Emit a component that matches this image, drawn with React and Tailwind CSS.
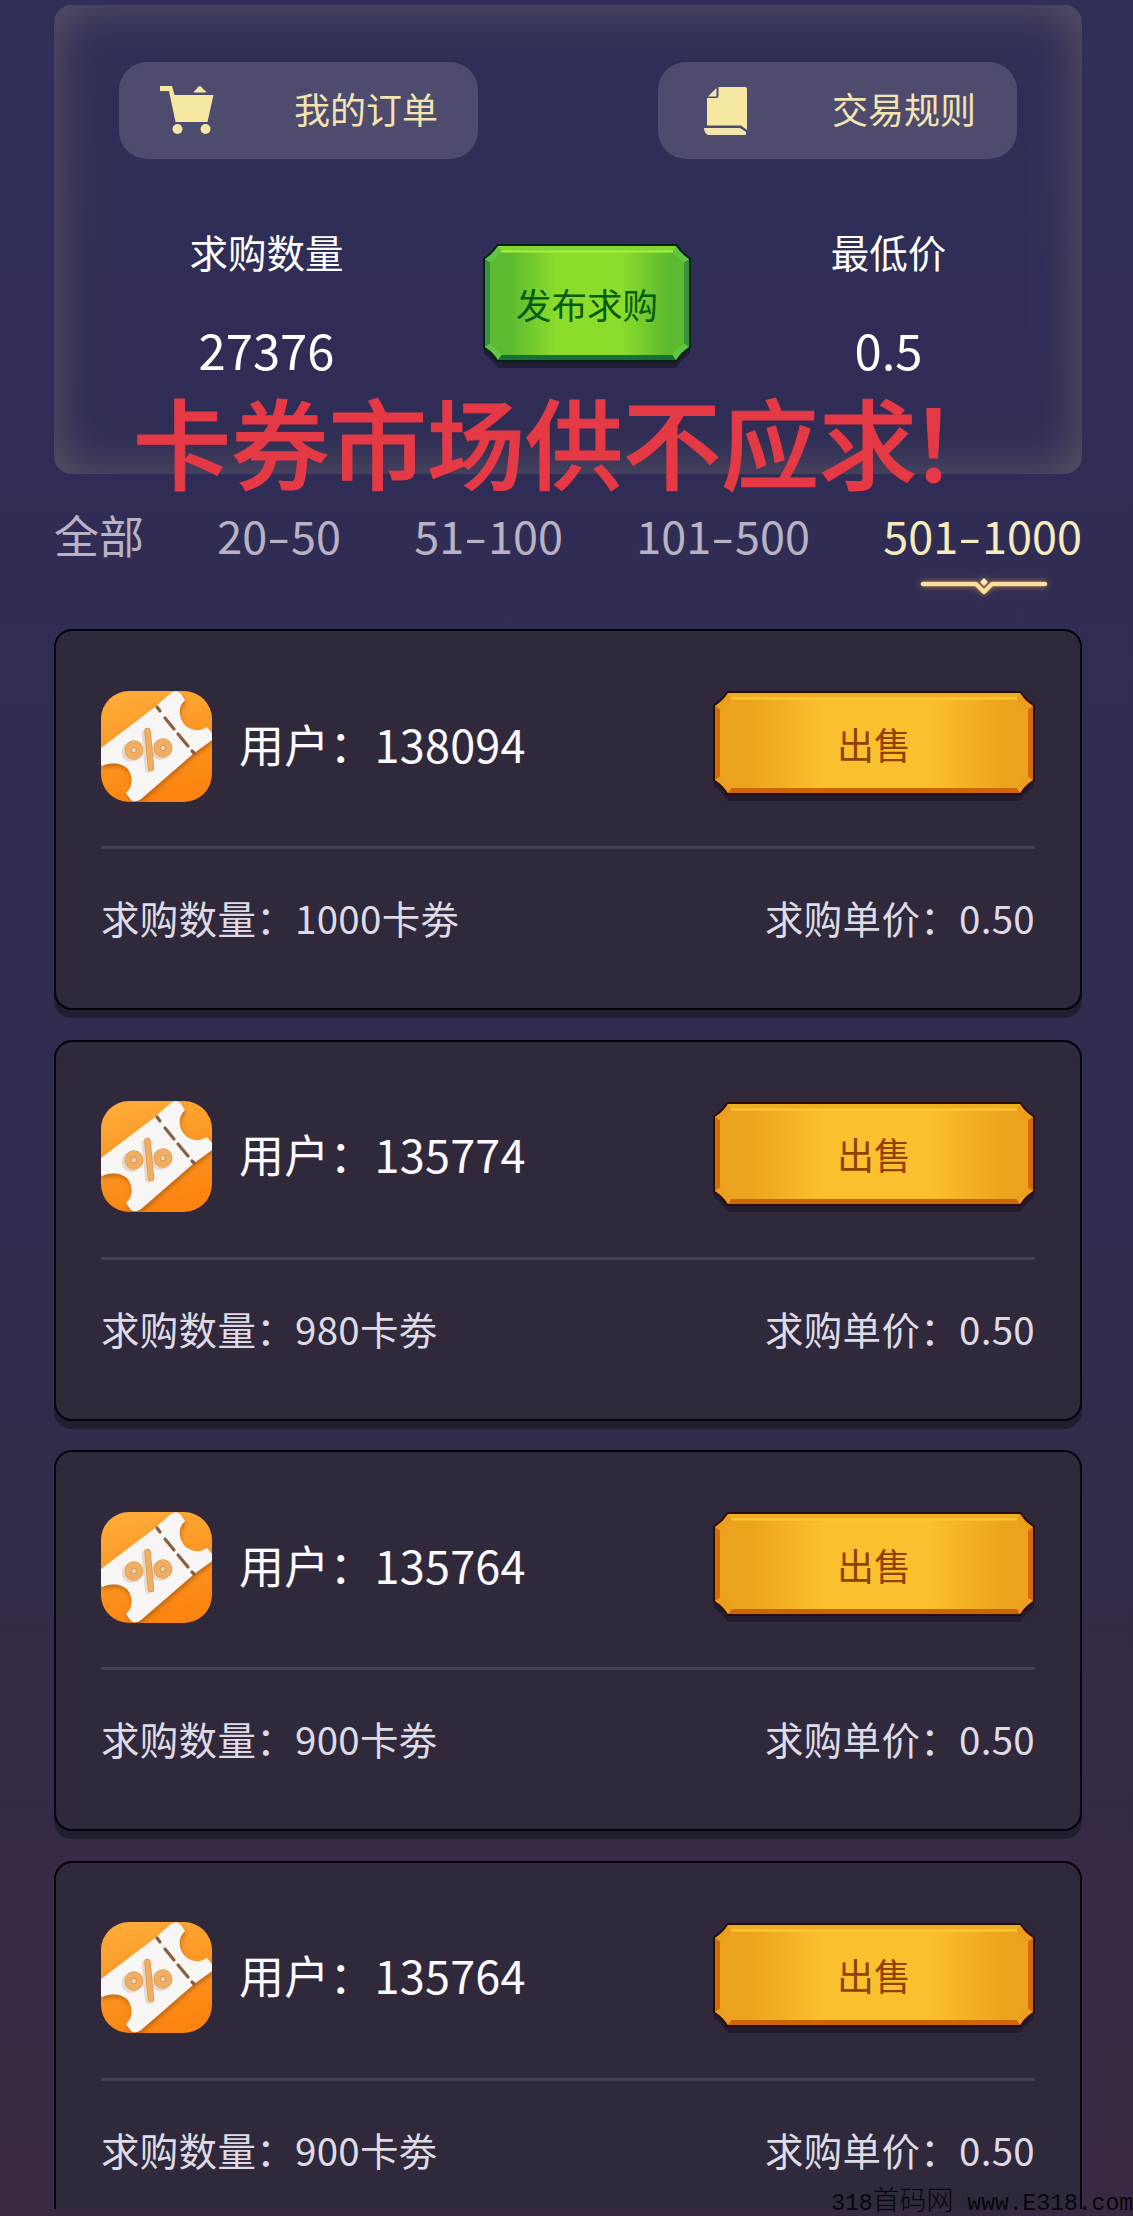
const cards = [
  { id: '138094', qty: '1000' },
  { id: '135774', qty: '980' },
  { id: '135764', qty: '900' },
  { id: '135764', qty: '900' },
];

const tabs = [['全部'], ['20', '50'], ['51', '100'], ['101', '500'], ['501', '1000']];

function Cart() {
  return (
    <svg className="h-[49px] w-[56px]" viewBox="0 0 56 49" fill="#f6e8a2">
      <path d="M1 0H13L15.500 9H54.500L48.500 36H16.500L10 5H1Z" />
      <path d="M34.500 6.500C35.500 4 37.500 4 38.500 1.500Q41 -1 43 1.500C44 4 46.500 4 47.500 6.500Z" />
      <circle cx="18.500" cy="43" r="5" />
      <circle cx="46.500" cy="43" r="5" />
    </svg>
  );
}

function Rules() {
  return (
    <svg className="h-[48px] w-[46px]" viewBox="0 0 46 48">
      <path d="M15.500 0H42Q44 0 44 2V43L38 38.500H4V11H13.500Q15.500 11 15.500 9Z" fill="#f6e8a2" />
      <path d="M13.500 1V9.500H5Z" fill="#efe4bd" />
      <path d="M1 41H37L43 45V48H5Q1 46 1 41Z" fill="#f2e5ae" />
    </svg>
  );
}

function Avatar({ uid }) {
  return (
    <svg className="h-[111px] w-[111px] shrink-0 rounded-[28px]" viewBox="0 0 111 111">
      <defs>
        <linearGradient id={`o${uid}`} x1="0" y1="0" x2="0.300" y2="1">
          <stop offset="0" stopColor="#ffae3c" />
          <stop offset="1" stopColor="#fb8510" />
        </linearGradient>
        <filter id={`s${uid}`} x="-20%" y="-20%" width="140%" height="140%">
          <feDropShadow dx="1" dy="3" stdDeviation="2" floodColor="#8a4300" floodOpacity="0.500" />
        </filter>
      </defs>
      <rect width="111" height="111" fill={`url(#o${uid})`} />
      <path
        filter={`url(#s${uid})`}
        d="M0 57L54 16L56 14L70 2Q76 -2 80 3L84 9C76 16 78 27 83 33C89 40 99 41 106 36L111 42V49L93 62L40 108Q34 112 30 109L25 102C33 95 32 84 26 77C19 71 9 71 1 75L0 73Z"
        fill="#f8f6f5"
      />
      <path d="M56 16L59 20M64 27L73 38M77 43L87 55M91 60L93 62" stroke="#86603f" strokeWidth="3.200" strokeLinecap="round" />
      <g fill="none" strokeLinecap="round">
        <g stroke="#e6d9cf" transform="translate(-3 2)">
          <ellipse cx="33" cy="59" rx="6" ry="6.500" strokeWidth="7" />
          <ellipse cx="62" cy="57" rx="6" ry="6.500" strokeWidth="7" />
          <path d="M46.500 40L50 77" strokeWidth="6" />
        </g>
        <g stroke="#dd964e">
          <ellipse cx="33" cy="59" rx="5.600" ry="6" strokeWidth="7.600" />
          <ellipse cx="62" cy="57" rx="5.600" ry="6" strokeWidth="7.600" />
          <path d="M46.500 40L50 77" strokeWidth="6.500" />
        </g>
        <g stroke="#f0ae62">
          <ellipse cx="33" cy="59" rx="5.800" ry="6.200" strokeWidth="6" />
          <ellipse cx="62" cy="57" rx="5.800" ry="6.200" strokeWidth="6" />
          <path d="M46.500 40L50 77" strokeWidth="5" />
        </g>
      </g>
    </svg>
  );
}

function Plate({ w, h, c, id }) {
  // Rectangle inset by i whose corners are cut by a, each cut slightly concave.
  const shape = (i, a) => {
    const l = i;
    const r = w - i;
    const t = i;
    const b = h - i;
    const q = a * 0.62;
    return `M${l + a} ${t}H${r - a}Q${r - q} ${t + q} ${r} ${t + a}V${b - a}Q${r - q} ${b - q} ${r - a} ${b}H${l + a}Q${l + q} ${b - q} ${l} ${b - a}V${t + a}Q${l + q} ${t + q} ${l + a} ${t}Z`;
  };
  const corner = 'M2 15Q10 10 15 2L18.500 7Q14 14 7 18.500Z';
  return (
    <svg className="absolute left-0 top-0 overflow-visible" width={w} height={h + 8} viewBox={`0 0 ${w} ${h + 8}`}>
      <defs>
        <linearGradient id={id}>
          <stop offset="0" stopColor={c.edge} />
          <stop offset="0.100" stopColor={c.edge} />
          <stop offset="0.340" stopColor={c.mid} />
          <stop offset="0.680" stopColor={c.mid} />
          <stop offset="0.920" stopColor={c.edge} />
          <stop offset="1" stopColor={c.edge} />
        </linearGradient>
      </defs>
      <path d={shape(1, 14)} transform="translate(0 7)" fill="#1f1a2b" opacity="0.750" />
      <path d={shape(0, 14)} fill={c.line} />
      <path d={shape(2, 13)} fill={c.side} />
      <path d={`M15 2H${w - 15}L${w - 18} 8H18Z`} fill={c.top} />
      <path d={`M15 ${h - 2}H${w - 15}L${w - 18} ${h - 8}H18Z`} fill={c.bottom} />
      <path d={shape(7, 11)} fill={`url(#${id})`} />
      <g fill={c.corner}>
        <path d={corner} />
        <path d={corner} transform={`translate(${w} 0) scale(-1 1)`} />
        <path d={corner} transform={`translate(0 ${h}) scale(1 -1)`} />
        <path d={corner} transform={`translate(${w} ${h}) scale(-1 -1)`} />
      </g>
      <path d={`M18 7.500H${w - 18}`} stroke={c.glow} strokeWidth="2" />
    </svg>
  );
}

const gold = { edge: '#eda31d', mid: '#fbc02d', line: '#2b0d08', side: '#d36c06', top: '#eeae20', bottom: '#cb6605', corner: '#ee9d1f', glow: '#ffcb38' };
const green = { edge: '#5cba31', mid: '#8bdc2b', line: '#04200f', side: '#329440', top: '#83d72e', bottom: '#17703a', corner: '#5fc744', glow: '#a8ef40' };

function Card({ id, qty, uid }) {
  return (
    <div className="h-[381px] shrink-0 rounded-[18px] border-2 border-[#05030c] bg-[#2f293b] px-[45px] shadow-[0_8px_0_#221d2f]">
      <div className="flex h-[218px] items-center justify-between border-b-[3px] border-[#463f54] pt-[15px]">
        <div className="flex items-center gap-[27px]">
          <Avatar uid={uid} />
          <span className="pb-[6px] text-[45px] leading-none tracking-[0.200px] text-[#fbf9fd]">用户：{id}</span>
        </div>
        <button className="relative mb-[6px] flex h-[104px] w-[322px] items-center justify-center">
          <Plate w={322} h={104} c={gold} id={`g${uid}`} />
          <span className="relative pt-[2px] text-[37px] leading-none text-[#8f4203]">出售</span>
        </button>
      </div>
      <div className="flex h-[137px] items-center justify-between text-[38.500px] leading-none tracking-[0.300px] text-[#dfdbe6]">
        <span>求购数量：{qty}卡劵</span>
        <span>求购单价：0.50</span>
      </div>
    </div>
  );
}

export default function App() {
  return (
    <div className="relative flex h-[2216px] w-[1133px] flex-col overflow-hidden bg-[linear-gradient(180deg,#2f2f58_0%,#302c54_30%,#332b4c_60%,#382a42_100%)] pl-[54px] pr-[51px] pt-[5px] font-['Noto_Sans_CJK_SC',sans-serif]">
      <section className="relative h-[469px] shrink-0 rounded-[18px] px-[65px] pt-[57px] shadow-[inset_0_0_50px_#5d5964]">
        <div className="flex justify-between">
          <button className="flex h-[97px] w-[359px] items-center justify-between rounded-[28px] bg-[#4d4b6e] pl-[40px] pr-[40px]">
            <Cart />
            <span className="pb-[5px] text-[36px] leading-none text-[#f3e4b2]">我的订单</span>
          </button>
          <button className="flex h-[97px] w-[359px] items-center justify-between rounded-[28px] bg-[#4d4b6e] pl-[45px] pr-[41px]">
            <Rules />
            <span className="pb-[5px] text-[36px] leading-none text-[#f3e4b2]">交易规则</span>
          </button>
        </div>
        <div className="flex justify-between px-[18px] pt-[72px] text-white">
          <div className="flex w-[259px] flex-col items-center">
            <span className="text-[38.500px] leading-[40px]">求购数量</span>
            <span className="pt-[53px] text-[49px] leading-[49px]">27376</span>
          </div>
          <button className="relative mt-[13px] flex h-[118px] w-[208px] items-center justify-center">
            <Plate w={208} h={118} c={green} id="green" />
            <span className="relative pt-[2px] text-[35.500px] leading-none text-[#075c10]">发布求购</span>
          </button>
          <div className="flex w-[221px] flex-col items-center">
            <span className="text-[38.500px] leading-[40px]">最低价</span>
            <span className="pt-[53px] text-[49px] leading-[49px]">0.5</span>
          </div>
        </div>
        <div className="absolute left-[79px] top-[385px] whitespace-nowrap text-[98px] font-medium leading-[98px] text-[#e53a45] [-webkit-text-stroke:1px_#e53a45]">
          卡券市场供不应求<span className="-ml-[8px]">！</span>
        </div>
      </section>
      <nav className="flex h-[155px] shrink-0 justify-between pt-[36px] text-[45px] leading-[50px] text-[#b9b1c4]">
        {tabs.map(([from, to], i) => (
          <div key={from} className={i === 4 ? 'flex flex-col text-[#f5ebbd]' : ''}>
            <div>
              {from}
              {to && <span className="inline-block w-[23.800px] origin-left scale-x-150">-</span>}
              {to}
            </div>
            {i === 4 && (
              <svg className="ml-[33px] mt-[15px] drop-shadow-[0_0_3px_#c08a3c]" width="136" height="24" viewBox="0 0 136 24" fill="none">
                <path d="M7 9H60L68 17L76 9H129" stroke="#f9dfa0" strokeWidth="4.500" strokeLinecap="round" strokeLinejoin="round" />
                <path d="M68 3L72 7L68 11L64 7Z" fill="#fbe9b8" />
              </svg>
            )}
          </div>
        ))}
      </nav>
      <main className="flex h-[1580px] shrink-0 flex-col gap-[29.600px] overflow-hidden">
        {cards.map((c, i) => (
          <Card key={i} uid={i} id={c.id} qty={c.qty} />
        ))}
      </main>
      <div className="absolute bottom-[-1px] right-0 whitespace-pre font-['Liberation_Mono','Noto_Sans_CJK_SC',monospace] text-[23px] leading-[26px] text-[#08060c]">
        318<span className="text-[27px] font-light leading-[26px]">首码网</span> www.E318.com
      </div>
    </div>
  );
}
